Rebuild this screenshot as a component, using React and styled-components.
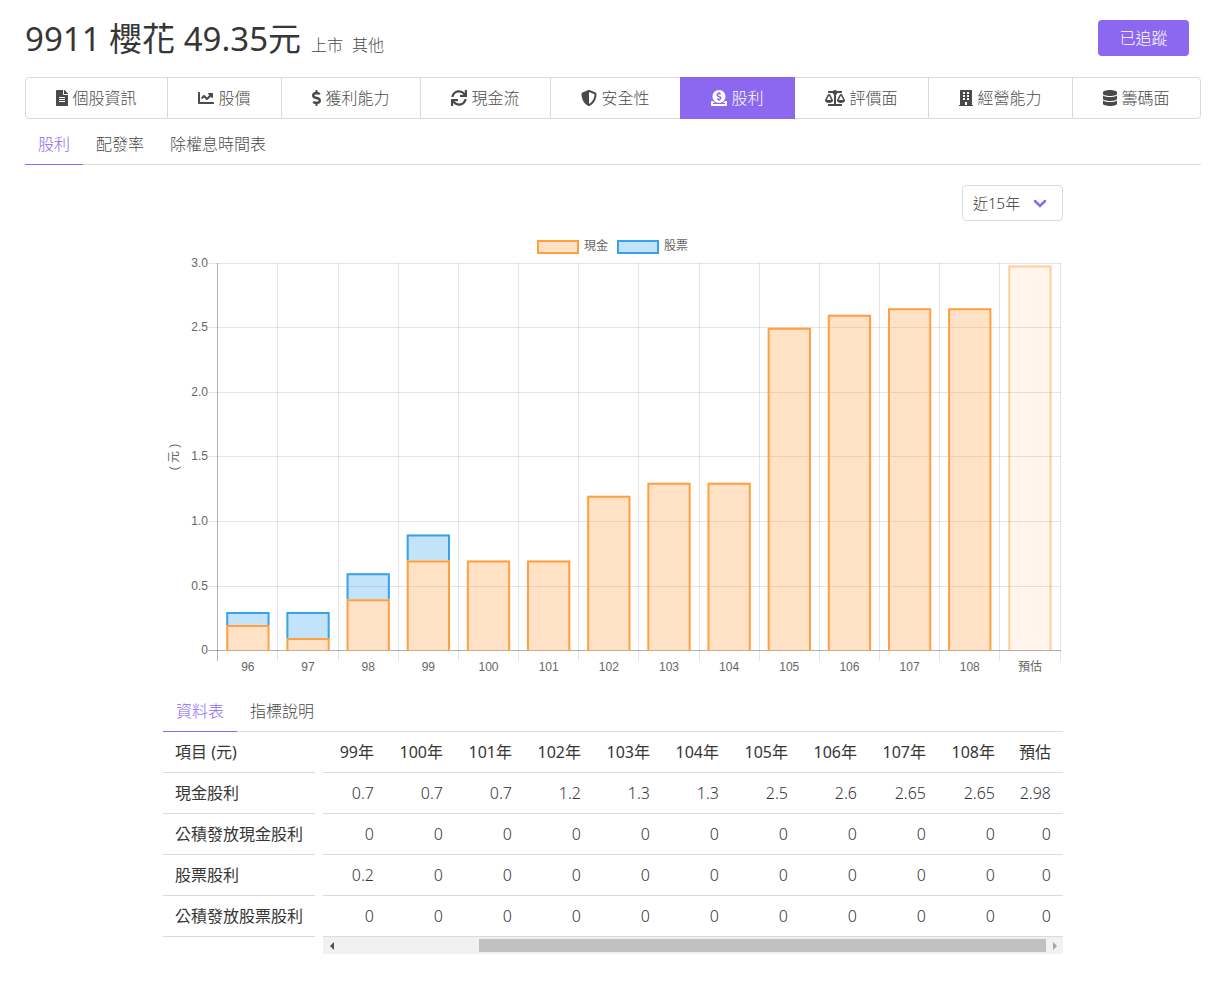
import React, { useState } from 'react';
import styled, { createGlobalStyle, ThemeProvider } from 'styled-components';
import {
  FaFileAlt,
  FaChartLine,
  FaDollarSign,
  FaSync,
  FaShieldAlt,
  FaDonate,
  FaBalanceScale,
  FaBuilding,
  FaDatabase,
} from 'react-icons/fa';

const theme = {
  colors: {
    primary: '#8c67ef',
    text: '#4a4a4a',
    strong: '#363636',
    border: '#dbdbdb',
    cash: '#ff9f40',
    stock: '#36a2eb',
    axis: '#666666',
  },
};

const GlobalStyle = createGlobalStyle`
  * {
    box-sizing: border-box;
  }

  body {
    margin: 0;
    background: #ffffff;
    color: #4a4a4a;
    font-family: 'Noto Sans', 'Noto Sans CJK TC', sans-serif;
    font-size: 16px;
    font-weight: 300;
    line-height: 24px;
  }
`;

const Page = styled.main`
  padding: 16px 30px 28px 25px;
`;

const Header = styled.header`
  display: flex;
  align-items: center;
  justify-content: space-between;
  height: 44px;
  padding-right: 12px;
`;

const Heading = styled.div`
  display: flex;
  align-items: baseline;
  padding-top: 2px;
`;

const Title = styled.h1`
  margin: 0 10px 0 0;
  color: ${({theme}) => theme.colors.strong};
  font-size: 33px;
  font-weight: 400;
  line-height: 44px;
`;

const Tag = styled.span`
  margin-right: 9px;
`;

const FollowButton = styled.button`
  width: 91px;
  height: 36px;
  padding: 0;
  border: 0;
  border-radius: 4px;
  background: ${({theme}) => theme.colors.primary};
  color: #ffffff;
  font: inherit;
  cursor: pointer;
`;

const Nav = styled.nav`
  display: flex;
  margin-top: 17px;
`;

const NavLink = styled.a`
  display: flex;
  flex: 1 1 auto;
  align-items: center;
  justify-content: center;
  gap: 4px;
  height: 42px;
  margin-left: -1px;
  border: 1px solid ${({theme, $active}) => $active ? theme.colors.primary : theme.colors.border};
  background: ${({theme, $active}) => $active ? theme.colors.primary : '#ffffff'};
  color: ${({theme, $active}) => $active ? '#ffffff' : theme.colors.text};
  text-decoration: none;
  z-index: ${({$active}) => $active ? 1 : 0};

  &:first-child {
    margin-left: 0;
    border-radius: 4px 0 0 4px;
  }

  &:last-child {
    border-radius: 0 4px 4px 0;
  }

  svg {
    flex: none;
    width: ${({$iconWidth}) => $iconWidth}px;
    height: 16px;
  }
`;

const Tabs = styled.div`
  display: flex;
  margin-top: ${({$top}) => $top}px;
  box-shadow: inset 0 -1px ${({theme}) => theme.colors.border};
`;

const Tab = styled.a`
  padding: 8px 13px;
  border-bottom: 1px solid ${({theme, $active}) => $active ? theme.colors.primary : 'transparent'};
  color: ${({theme, $active}) => $active ? theme.colors.primary : theme.colors.text};
  text-decoration: none;
`;

const Content = styled.section`
  max-width: 900px;
  margin: 20px auto 0;
`;

const Filter = styled.div`
  position: relative;
  width: 101px;
  margin-left: auto;
`;

const RangeSelect = styled.select`
  display: block;
  width: 100%;
  height: 36px;
  padding: 0 28px 0 10px;
  border: 1px solid ${({theme}) => theme.colors.border};
  border-radius: 4px;
  appearance: none;
  background: #ffffff;
  color: ${({theme}) => theme.colors.strong};
  font: inherit;
  font-size: 15px;
`;

const Chevron = styled.svg`
  position: absolute;
  top: 14px;
  right: 16px;
  width: 14px;
  height: 9px;
  fill: none;
  stroke: ${({theme}) => theme.colors.primary};
  stroke-width: 2.5;
  stroke-linecap: round;
  pointer-events: none;
`;

const Chart = styled.svg`
  display: block;
  width: 100%;
  margin-top: 10px;

  text {
    fill: ${({theme}) => theme.colors.axis};
    font-family: 'Liberation Sans', 'Noto Sans CJK TC', sans-serif;
    font-size: 12px;
    font-weight: 400;
  }
`;

const Tables = styled.div`
  display: flex;
  gap: 8px;
`;

const LabelTable = styled.div`
  flex: none;
  width: 152px;
`;

const YearTable = styled.div`
  flex: 1;
  min-width: 0;
`;

const Table = styled.table`
  width: 100%;
  table-layout: fixed;
  border-collapse: separate;
  border-spacing: 0;
  color: ${({theme}) => theme.colors.strong};
  white-space: nowrap;
`;

const Cell = styled.td`
  width: ${({$width}) => $width ? `${$width}px` : 'auto'};
  height: 41px;
  padding: 0 12px;
  border-bottom: 1px solid ${({theme}) => theme.colors.border};
  font-weight: ${({as}) => as === 'th' ? 400 : 300};
  text-align: ${({$align}) => $align || 'right'};
`;

const ScrollBar = styled.div`
  display: flex;
  align-items: center;
  height: 17px;
  background: #f1f1f1;
`;

const ScrollArrow = styled.button`
  display: flex;
  align-items: center;
  justify-content: center;
  width: 17px;
  height: 17px;
  padding: 0;
  border: 0;
  background: transparent;
  color: ${({disabled}) => disabled ? '#a3a3a3' : '#505050'};
`;

const Track = styled.div`
  flex: 1;
`;

const Thumb = styled.div`
  height: 13px;
  background: #c1c1c1;
`;

const sections = [
  { label: '個股資訊', Icon: FaFileAlt, width: 12 },
  { label: '股價', Icon: FaChartLine, width: 16 },
  { label: '獲利能力', Icon: FaDollarSign, width: 9 },
  { label: '現金流', Icon: FaSync, width: 16 },
  { label: '安全性', Icon: FaShieldAlt, width: 16 },
  { label: '股利', Icon: FaDonate, width: 16, active: true },
  { label: '評價面', Icon: FaBalanceScale, width: 20 },
  { label: '經營能力', Icon: FaBuilding, width: 14 },
  { label: '籌碼面', Icon: FaDatabase, width: 14 },
];

const dividends = [
  { year: '96', cash: 0.2, stock: 0.1 },
  { year: '97', cash: 0.1, stock: 0.2 },
  { year: '98', cash: 0.4, stock: 0.2 },
  { year: '99', cash: 0.7, stock: 0.2 },
  { year: '100', cash: 0.7, stock: 0 },
  { year: '101', cash: 0.7, stock: 0 },
  { year: '102', cash: 1.2, stock: 0 },
  { year: '103', cash: 1.3, stock: 0 },
  { year: '104', cash: 1.3, stock: 0 },
  { year: '105', cash: 2.5, stock: 0 },
  { year: '106', cash: 2.6, stock: 0 },
  { year: '107', cash: 2.65, stock: 0 },
  { year: '108', cash: 2.65, stock: 0 },
  { year: '預估', cash: 2.98, stock: 0, estimate: true },
];

const rows = [
  { label: '現金股利', value: (d) => d.cash },
  { label: '公積發放現金股利', value: () => 0 },
  { label: '股票股利', value: (d) => d.stock },
  { label: '公積發放股票股利', value: () => 0 },
];

const ticks = ['0', '0.5', '1.0', '1.5', '2.0', '2.5', '3.0'];

const plot = { left: 54.8, right: 897, top: 32, bottom: 419.9 };
const step = (plot.right - plot.left) / dividends.length;
const barWidth = step * 0.72 - 2;
const scaleY = (value) => plot.bottom - (value / 3) * (plot.bottom - plot.top);
const snap = (value) => Math.floor(value) + 0.5;

// Three sided outline, the base of a bar stays open
const Bar = ({ x, from, to, color, estimate }) => {
  const top = scaleY(to);
  const bottom = scaleY(from);
  return (
    <g opacity={estimate ? 0.5 : 1}>
      <rect
        x={x}
        y={top}
        width={barWidth}
        height={bottom - top}
        fill={color}
        fillOpacity={estimate ? 0.2 : 0.3}
      />
      <path
        d={`M${x} ${bottom}V${top + 1}H${x + barWidth}V${bottom}`}
        fill="none"
        stroke={color}
        strokeWidth="2"
      />
    </g>
  );
};

const DividendChart = () => {
  const { cash, stock } = theme.colors;
  return (
    <Chart viewBox="0 0 900 450" role="img" aria-label="股利">
      <rect x="375" y="10" width="40" height="12" fill={cash} fillOpacity="0.3" stroke={cash} strokeWidth="2" />
      <text x="421" y="19">現金</text>
      <rect x="455" y="10" width="40" height="12" fill={stock} fillOpacity="0.3" stroke={stock} strokeWidth="2" />
      <text x="501" y="19">股票</text>

      {ticks.map((tick) => {
        const y = snap(scaleY(Number(tick)));
        return (
          <g key={tick}>
            <line x1="45" x2="898" y1={y} y2={y} stroke="#000000" strokeOpacity={tick === '0' ? 0.3 : 0.1} />
            <text x="45" y={y + 3} textAnchor="end">{tick}</text>
          </g>
        );
      })}
      {[...dividends, null].map((d, i) => {
        const x = snap(plot.left + step * i);
        return (
          <g key={i}>
            <line x1={x} x2={x} y1="32" y2="430" stroke="#000000" strokeOpacity={i ? 0.1 : 0.3} />
            {d && <text x={plot.left + step * (i + 0.5)} y="440" textAnchor="middle">{d.year}</text>}
          </g>
        );
      })}
      <text x="15" y="226" textAnchor="middle" transform="rotate(-90 15 226)">( 元 )</text>

      {dividends.map((d, i) => {
        const x = plot.left + step * i + (step - barWidth) / 2;
        return (
          <g key={d.year}>
            {d.stock > 0 && <Bar x={x} from={d.cash} to={d.cash + d.stock} color={stock} />}
            <Bar x={x} from={0} to={d.cash} color={cash} estimate={d.estimate} />
          </g>
        );
      })}
    </Chart>
  );
};

const VISIBLE_YEARS = 11;
const lastStart = dividends.length - VISIBLE_YEARS;

const columnWidth = (d) => {
  if (d.estimate) return 56;
  return d.year.length === 2 ? 60 : 69;
};
const totalWidth = (list) => list.reduce((sum, d) => sum + columnWidth(d), 0);

const DividendTable = () => {
  // The newest years are in view first
  const [start, setStart] = useState(lastStart);
  const years = dividends.slice(start, start + VISIBLE_YEARS);
  const percent = (list) => `${(totalWidth(list) / totalWidth(dividends)) * 100}%`;

  return (
    <Tables>
      <LabelTable>
        <Table>
          <thead>
            <tr><Cell as="th" $align="left">項目 (元)</Cell></tr>
          </thead>
          <tbody>
            {rows.map((row) => (
              <tr key={row.label}><Cell as="th" $align="left">{row.label}</Cell></tr>
            ))}
          </tbody>
        </Table>
      </LabelTable>
      <YearTable>
        <Table>
          <thead>
            <tr>
              {years.map((d, i) => (
                <Cell as="th" key={d.year} $width={i > 0 && columnWidth(d)}>
                  {d.estimate ? d.year : `${d.year}年`}
                </Cell>
              ))}
            </tr>
          </thead>
          <tbody>
            {rows.map((row) => (
              <tr key={row.label}>
                {years.map((d) => <Cell key={d.year}>{row.value(d)}</Cell>)}
              </tr>
            ))}
          </tbody>
        </Table>
        <ScrollBar>
          <ScrollArrow aria-label="向左捲動" disabled={start === 0} onClick={() => setStart(start - 1)}>
            <svg width="4" height="8" fill="currentColor"><path d="M4 0v8L0 4z" /></svg>
          </ScrollArrow>
          <Track>
            <Thumb style={{ marginLeft: percent(dividends.slice(0, start)), width: percent(years) }} />
          </Track>
          <ScrollArrow aria-label="向右捲動" disabled={start === lastStart} onClick={() => setStart(start + 1)}>
            <svg width="4" height="8" fill="currentColor"><path d="M0 0v8l4-4z" /></svg>
          </ScrollArrow>
        </ScrollBar>
      </YearTable>
    </Tables>
  );
};

const App = () => {
  return (
    <ThemeProvider theme={theme}>
      <GlobalStyle />
      <Page>
        <Header>
          <Heading>
            <Title>9911 櫻花 49.35元</Title>
            <Tag>上市</Tag>
            <Tag>其他</Tag>
          </Heading>
          <FollowButton>已追蹤</FollowButton>
        </Header>
        <Nav>
          {sections.map(({ label, Icon, width, active }) => (
            <NavLink key={label} href="#" $active={active} $iconWidth={width}>
              <Icon />
              {label}
            </NavLink>
          ))}
        </Nav>
        <Tabs $top={5}>
          <Tab href="#" $active>股利</Tab>
          <Tab href="#">配發率</Tab>
          <Tab href="#">除權息時間表</Tab>
        </Tabs>
        <Content>
          <Filter>
            <RangeSelect aria-label="期間">
              <option>近15年</option>
            </RangeSelect>
            <Chevron viewBox="0 0 14 9"><path d="M2 2l5 5 5-5" /></Chevron>
          </Filter>
          <DividendChart />
          <Tabs $top={10}>
            <Tab href="#" $active>資料表</Tab>
            <Tab href="#">指標說明</Tab>
          </Tabs>
          <DividendTable />
        </Content>
      </Page>
    </ThemeProvider>
  );
};

export default App;
